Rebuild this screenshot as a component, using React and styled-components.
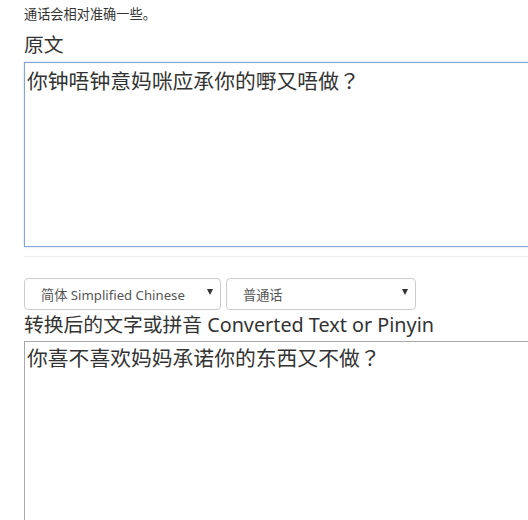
import React from "react";
import styled, { createGlobalStyle } from "styled-components";

const GlobalStyle = createGlobalStyle`
  html, body {
    margin: 0;
    padding: 0;
    overflow: hidden;
    background: #fff;
  }
  body {
    font-family: "Noto Sans", "Noto Sans CJK SC", sans-serif;
    color: #333;
  }
`;

const Page = styled.div`
  width: 620px;
  padding: 5px 0 0 24px;
`;

const Note = styled.p`
  margin: 0;
  font-size: 13.2px;
  line-height: 18px;
`;

const Label = styled.label`
  display: block;
  font-size: 19.8px;
  line-height: 26px;
  margin-top: ${(p) => p.$top || 0}px;
  margin-bottom: ${(p) => p.$bottom || 0}px;
`;

const TextBox = styled.textarea`
  display: block;
  box-sizing: border-box;
  width: 100%;
  height: ${(p) => p.$height}px;
  margin: 0;
  padding: ${(p) => (p.$focused ? "3px 2px" : "1px 2px")};
  font-family: "Noto Sans CJK TC", "Noto Sans CJK SC", sans-serif;
  font-size: 20.8px;
  line-height: 29px;
  color: #333;
  resize: none;
  outline: none;
  border: 1px solid ${(p) => (p.$focused ? "#86a5d3" : "#a9a9a9")};
  border-radius: 0;
  box-shadow: ${(p) => (p.$focused ? "0 0 2px rgba(110, 150, 210, 0.4)" : "none")};
`;

const Rule = styled.hr`
  margin: 9px 0 21px;
  border: 0;
  border-top: 1px solid #eee;
`;

const SelectRow = styled.div`
  display: flex;
  gap: 5px;
`;

const Select = styled.div`
  box-sizing: border-box;
  width: ${(p) => p.$width}px;
  height: 32px;
  display: flex;
  align-items: center;
  justify-content: space-between;
  padding: 0 7px 0 16px;
  border: 1px solid #ccc;
  border-radius: 4px;
  font-size: 13.2px;
  color: #555;
  background: #fff;
`;

const Arrow = styled.span`
  width: 0;
  height: 0;
  margin-top: -4px;
  border-left: 3.5px solid transparent;
  border-right: 3.5px solid transparent;
  border-top: 6px solid #333;
`;

export default function App() {
  return (
    <>
      <GlobalStyle />
      <Page>
        <Note>通话会相对准确一些。</Note>
        <Label $top={9} $bottom={4}>原文</Label>
        <TextBox
          $focused
          $height={185}
          defaultValue="你钟唔钟意妈咪应承你的嘢又唔做？"
        />
        <Rule />
        <SelectRow>
          <Select $width={197}>
            <span>简体 Simplified Chinese</span>
            <Arrow />
          </Select>
          <Select $width={190}>
            <span>普通话</span>
            <Arrow />
          </Select>
        </SelectRow>
        <Label $top={2} $bottom={3}>转换后的文字或拼音 Converted Text or Pinyin</Label>
        <TextBox $height={220} defaultValue="你喜不喜欢妈妈承诺你的东西又不做？" />
      </Page>
    </>
  );
}
